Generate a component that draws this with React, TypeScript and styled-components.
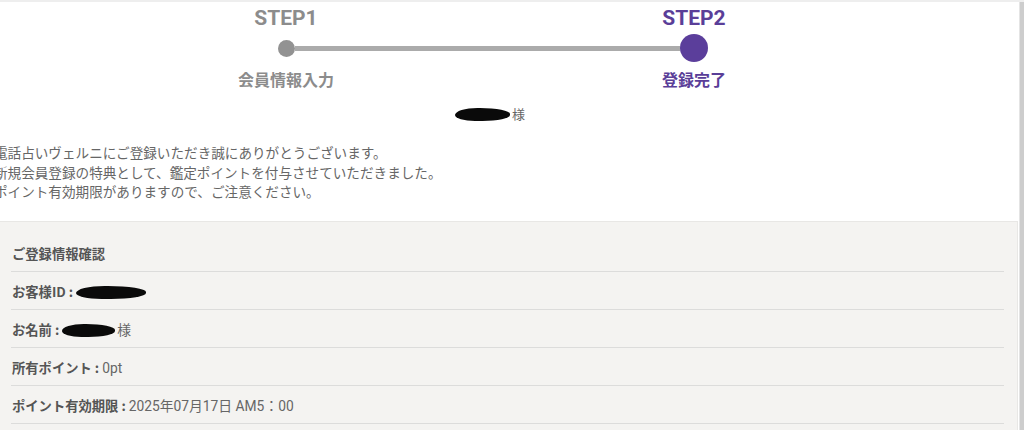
import styled, { createGlobalStyle } from "styled-components";

const GlobalStyle = createGlobalStyle`
  html, body {
    margin: 0;
    padding: 0;
    height: 430px;
    overflow: hidden;
    background: #ffffff;
  }
  body {
    font-family: Roboto, "Noto Sans CJK JP", sans-serif;
    color: #555;
  }
`;

const StyledWindow = styled.div`
  display: flex;
  height: 430px;
  border-top: 2px solid #eeeeee;
  box-sizing: border-box;
`;

const StyledMain = styled.div`
  flex: 1;
  overflow: hidden;
  padding-top: 4px;
`;

const StyledScrollbar = styled.div`
  width: 4px;
  background: #cdcdcd;
  border-left: 1px solid #e4e4e4;
`;

const StyledStepBar = styled.div`
  width: 528px;
  margin-left: 226px;
`;

const StyledStepRow = styled.div`
  display: flex;
  justify-content: space-between;
`;

const StyledStepTitle = styled.div<{ $active?: boolean }>`
  width: 120px;
  text-align: center;
  font-family: Roboto, "Liberation Sans", sans-serif;
  font-size: 21px;
  font-weight: 700;
  line-height: 24px;
  color: ${({ $active }) => ($active ? "#5a3e98" : "#8c8c8c")};
`;

const StyledStepLabel = styled.div<{ $active?: boolean }>`
  width: 120px;
  text-align: center;
  font-family: "Noto Sans CJK JP", sans-serif;
  font-size: 16px;
  font-weight: 700;
  line-height: 20px;
  color: ${({ $active }) => ($active ? "#5a3e98" : "#8c8c8c")};
`;

const StyledTrack = styled.div`
  display: flex;
  align-items: center;
  height: 28px;
  margin: 4px 0 7px;
  padding: 0 46px 0 52px;
`;

const StyledDot = styled.span<{ $active?: boolean }>`
  flex: none;
  width: ${({ $active }) => ($active ? "28px" : "17px")};
  height: ${({ $active }) => ($active ? "28px" : "17px")};
  border-radius: 50%;
  background: ${({ $active }) => ($active ? "#5b3e9b" : "#929292")};
`;

const StyledLine = styled.span`
  flex: 1;
  height: 5px;
  background: #ababab;
`;

const StyledGreeting = styled.div`
  margin-top: 16px;
  text-align: center;
  font-size: 13px;
  line-height: 20px;
  color: #666;
`;

const StyledRedacted = styled.span<{ $w: number }>`
  display: inline-block;
  width: ${({ $w }) => $w}px;
  height: 13px;
  margin-right: 2px;
  vertical-align: -2px;
  background: #0a0a0a;
  border-radius: 45% 60% 55% 40% / 60% 50% 50% 50%;
`;

const StyledMessage = styled.p`
  margin: 18px 0 0 -6px;
  font-family: "Noto Sans CJK JP", sans-serif;
  font-size: 13.6px;
  line-height: 19.5px;
  color: #666;
`;

const StyledPanel = styled.section`
  margin: 19px 1px 0 0;
  padding: 12px 13px 0 11px;
  height: 220px;
  background: #f4f3f1;
  border: 1px solid #e8e7e5;
  border-left: none;
`;

const StyledRow = styled.div`
  height: 38px;
  box-sizing: border-box;
  padding: 10px 0 0 1px;
  line-height: 19px;
  font-size: 13.3px;
  color: #666;
  border-bottom: 1px solid #dcdcdb;
  white-space: nowrap;
`;

const StyledLabel = styled.span`
  font-family: "Noto Sans CJK JP", sans-serif;
  font-weight: 700;
  color: #555;
`;

const StyledValue = styled.span`
  font-family: Roboto, "Noto Sans CJK JP", sans-serif;
  font-size: 13.8px;
  color: #666;
`;

export default function App() {
  return (
    <>
      <GlobalStyle />
      <StyledWindow>
        <StyledMain>
          <StyledStepBar>
            <StyledStepRow>
              <StyledStepTitle>STEP1</StyledStepTitle>
              <StyledStepTitle $active>STEP2</StyledStepTitle>
            </StyledStepRow>
            <StyledTrack>
              <StyledDot />
              <StyledLine />
              <StyledDot $active />
            </StyledTrack>
            <StyledStepRow>
              <StyledStepLabel>会員情報入力</StyledStepLabel>
              <StyledStepLabel $active>登録完了</StyledStepLabel>
            </StyledStepRow>
            <StyledGreeting>
              <StyledRedacted $w={55} />様
            </StyledGreeting>
          </StyledStepBar>

          <StyledMessage>
            電話占いヴェルニにご登録いただき誠にありがとうございます。
            <br />
            新規会員登録の特典として、鑑定ポイントを付与させていただきました。
            <br />
            ポイント有効期限がありますので、ご注意ください。
          </StyledMessage>

          <StyledPanel>
            <StyledRow>
              <StyledLabel>ご登録情報確認</StyledLabel>
            </StyledRow>
            <StyledRow>
              <StyledLabel>お客様ID : </StyledLabel>
              <StyledRedacted $w={70} />
            </StyledRow>
            <StyledRow>
              <StyledLabel>お名前 : </StyledLabel>
              <StyledRedacted $w={53} />
              <StyledValue>様</StyledValue>
            </StyledRow>
            <StyledRow>
              <StyledLabel>所有ポイント : </StyledLabel>
              <StyledValue>0pt</StyledValue>
            </StyledRow>
            <StyledRow>
              <StyledLabel>ポイント有効期限 : </StyledLabel>
              <StyledValue>2025年07月17日 AM5：00</StyledValue>
            </StyledRow>
          </StyledPanel>
        </StyledMain>
        <StyledScrollbar />
      </StyledWindow>
    </>
  );
}
